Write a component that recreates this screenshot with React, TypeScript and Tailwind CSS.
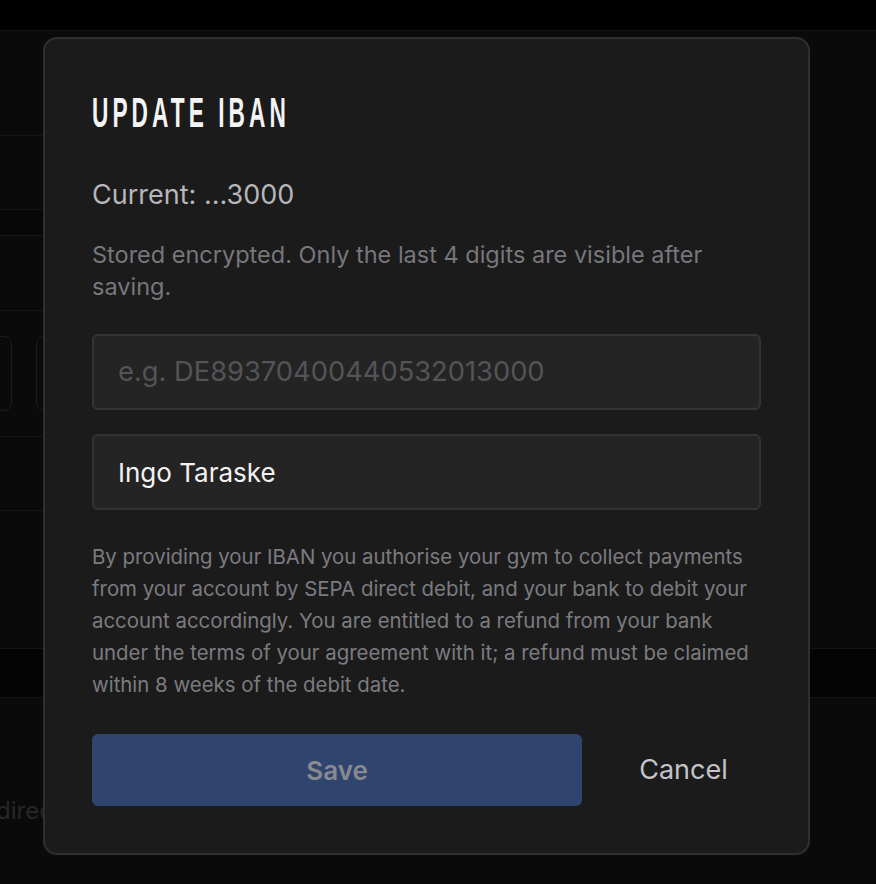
import React from "react";

const body = { fontFamily: "Inter, 'Noto Sans', sans-serif" };
const title = { fontFamily: "'Liberation Sans', Arial, sans-serif" };

function Backdrop() {
  return (
    <div className="flex h-full flex-col">
      <div className="h-[31px] shrink-0 border-b border-[#141414] bg-black" />
      <div className="flex flex-1 flex-col bg-[#0a0a0a]">
        <div className="w-[420px]">
          <div className="h-[105px] border-b border-[#161616]" />
          <div className="h-[74px] border-b border-[#161616]" />
          <div className="h-[26px] border-b border-[#161616] bg-[#070707]" />
          <div className="h-[75px] border-b border-[#161616]" />
          <div className="flex h-[126px] items-center gap-[24px] border-b border-[#161616] pl-0">
            <div className="-ml-[20px] h-[75px] w-[32px] rounded-lg border border-[#1c1c1c]" />
            <div className="h-[75px] w-[200px] rounded-lg border border-[#1c1c1c]" />
          </div>
          <div className="h-[74px] border-b border-[#161616]" />
        </div>
        <div className="h-[137px]" />
        <div className="h-[50px] border-y border-[#141414] bg-[#040404]" />
        <div className="flex h-[131px] items-end">
          <span className="-ml-[4px] text-[24px] text-[#262626]" style={body}>
            direct debit
          </span>
        </div>
      </div>
    </div>
  );
}

function Field({ value, placeholder }: { value?: string; placeholder?: string }) {
  return (
    <div className="flex h-[76px] items-center rounded-md border-2 border-[#333333] bg-[#242424] px-[24px]">
      {value ? (
        <span className="text-[26px] text-[#f2f2f2]">{value}</span>
      ) : (
        <span className="text-[27.3px] text-[#545458]">{placeholder}</span>
      )}
    </div>
  );
}

export default function App() {
  return (
    <div className="relative h-[884px] w-[876px] overflow-hidden bg-black" style={body}>
      <Backdrop />
      <div className="absolute left-[43px] top-[37px] w-[767px] rounded-[14px] border-2 border-[#2f2f2f] bg-[#1b1b1b] px-[47px] pb-[47px] pt-[50px]">
        <h2 className="h-[48px] text-[42px] font-bold leading-[48px] text-[#f4f4f4]" style={title}>
          <span className="inline-block origin-left scale-x-[0.54] tracking-[7.5px]">UPDATE IBAN</span>
        </h2>
        <p className="mt-[41px] text-[27px] leading-[34px] text-[#b6b6bb]">Current: …3000</p>
        <p className="mt-[27px] text-[23.5px] leading-[32px] text-[#77777c]">
          Stored encrypted. Only the last 4 digits are visible after saving.
        </p>
        <div className="mt-[31px] flex flex-col gap-[24px]">
          <Field placeholder="e.g. DE89370400440532013000" />
          <Field value="Ingo Taraske" />
        </div>
        <p className="mt-[31px] text-[20.4px] leading-[32px] text-[#7b7b80]">
          By providing your IBAN you authorise your gym to collect payments from your account by SEPA
          direct debit, and your bank to debit your account accordingly. You are entitled to a refund
          from your bank under the terms of your agreement with it; a refund must be claimed within 8
          weeks of the debit date.
        </p>
        <div className="mt-[33px] flex items-center">
          <button className="flex h-[72px] w-[490px] items-center justify-center rounded-md bg-[#2f446f] text-[26px] font-semibold text-[#888a8f]">
            Save
          </button>
          <button className="flex-1 pl-[24px] text-center text-[27px] text-[#c4c4c8]">Cancel</button>
        </div>
      </div>
    </div>
  );
}
